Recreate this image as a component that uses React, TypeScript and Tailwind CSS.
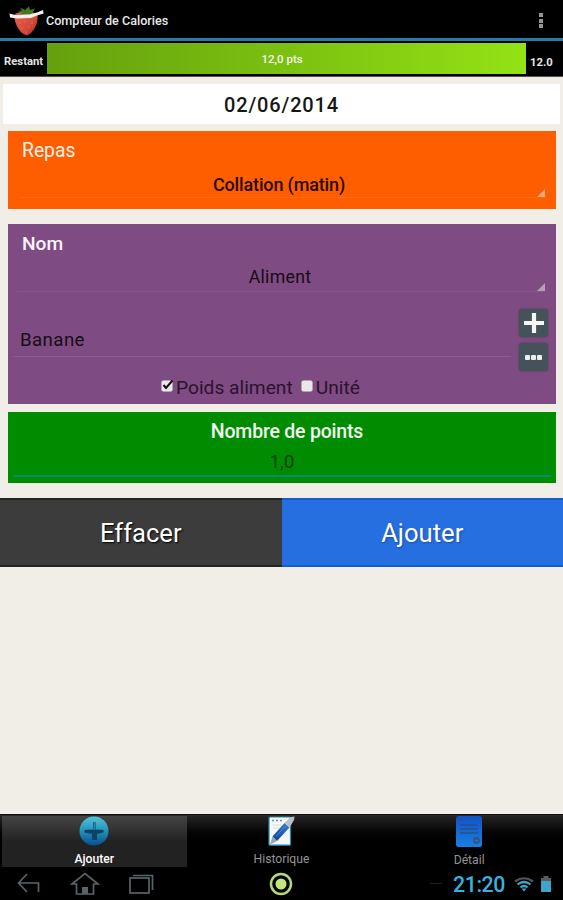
import React from 'react';
import { clsx } from 'clsx';

const StrawberryLogo = () => (
  <svg width="36" height="31" viewBox="0 0 36 31">
    <defs>
      <linearGradient id="berry" x1="0" y1="0" x2="1" y2="1">
        <stop offset="0" stopColor="#e8604c" />
        <stop offset="0.6" stopColor="#d64a39" />
        <stop offset="1" stopColor="#a52c20" />
      </linearGradient>
    </defs>
    <path d="M5.500 9C11 4 23 4 28.500 9C29.500 18 24 27 18 29.500C11 28 5 18 5.500 9Z" fill="url(#berry)" />
    <path d="M8 5L13 4.500L11 1.500L16 4L20 0.500L21 4L26 2.500L24 6L25 9L18 8L10 9L13 6Z" fill="#3f7a1e" />
    <path d="M0.500 7.500L6 9L20 8.500L28 6.500L34 4L34.500 7.500L28 9.500L22 12L8 12.500L1 11.500Z" fill="#f4f0ee" />
    <g fill="#ef8f7b">
      <circle cx="11" cy="17" r=".6" />
      <circle cx="16" cy="16" r=".6" />
      <circle cx="23" cy="17" r=".6" />
      <circle cx="13" cy="22" r=".6" />
      <circle cx="20" cy="21" r=".6" />
      <circle cx="17" cy="26" r=".6" />
    </g>
  </svg>
);

const AddIcon = () => (
  <svg width="30" height="30" viewBox="0 0 30 30">
    <defs>
      <linearGradient id="orb" x1="0" y1="0" x2="0" y2="1">
        <stop offset="0" stopColor="#52c3dc" />
        <stop offset="0.5" stopColor="#2391b5" />
        <stop offset="1" stopColor="#0a4d90" />
      </linearGradient>
    </defs>
    <circle cx="15" cy="15" r="14.500" fill="url(#orb)" />
    <path d="M14 6H16.500V13.500L24.500 14V16.500L18 18V24H13V18L5.500 16.500V14L14 13.500Z" fill="#0c4469" />
    <path d="M15.200 6V14" stroke="#2a87a8" strokeWidth="1.500" />
  </svg>
);

const HistoryIcon = () => (
  <svg width="27" height="30" viewBox="0 0 27 30">
    <defs>
      <linearGradient id="pen" x1="0" y1="1" x2="1" y2="0">
        <stop offset="0" stopColor="#0b3f91" />
        <stop offset="1" stopColor="#3a7fce" />
      </linearGradient>
    </defs>
    <rect x="1" y="1" width="21.500" height="28.200" rx="1" fill="#f3f8fa" stroke="#2a87ae" strokeWidth="1.200" />
    <path d="M4 4.500H16" stroke="#7f8b91" strokeWidth="1.500" strokeDasharray="2 2" />
    <path d="M5 9H14M5 12H12" stroke="#d5e0e6" strokeWidth="1" />
    <path d="M4.500 20.500L16.500 7L21.500 11.500L9 25Z" fill="url(#pen)" />
    <path d="M16.500 7L22.500 1L26.500 0.500L26 4L21.500 11.500Z" fill="#b9bfc9" />
    <path d="M4.500 20.500L9 25L2 28.500Z" fill="#9aa1a8" />
    <path d="M8 20.500L18 9.500" stroke="#5d92d6" strokeWidth="0.800" />
  </svg>
);

const DetailIcon = () => (
  <svg width="26" height="31" viewBox="0 0 26 31">
    <defs>
      <linearGradient id="sheet" x1="0" y1="0" x2="0" y2="1">
        <stop offset="0" stopColor="#1552c6" />
        <stop offset="1" stopColor="#1680e2" />
      </linearGradient>
    </defs>
    <rect width="26" height="31" rx="2.500" fill="url(#sheet)" />
    <path d="M4 3.500H7M4 9H22M4 13H22M4 17H22" stroke="#27508e" strokeWidth="1.300" />
    <circle cx="20.500" cy="24.500" r="3.400" fill="#2a568c" />
    <path d="M18.500 24.500H22.500M20.500 22.500V26.500" stroke="#3f6d9f" strokeWidth="0.800" />
  </svg>
);

const SpinnerCorner = () => (
  <svg width="8" height="8" viewBox="0 0 8 8" className="shrink-0">
    <path d="M8 0V8H0Z" fill="#cfcfcf" fillOpacity="0.65" />
  </svg>
);

interface CheckProps {
  label: string;
  checked?: boolean;
}

function Check({ label, checked }: CheckProps) {
  return (
    <label className="flex items-center gap-[3px]">
      <svg width="12" height="12" viewBox="0 0 12 12" className="mb-1 overflow-visible">
        <rect x="0.500" y="0.500" width="11" height="11" rx="2" fill="#e9e7ea" stroke="#b9a8bc" strokeWidth="0.500" />
        {checked && <path d="M2.500 5L5 8L11.500 0.500" fill="none" stroke="#111" strokeWidth="2" />}
      </svg>
      <span>{label}</span>
    </label>
  );
}

const tabs = [
  { name: 'Ajouter', icon: <AddIcon />, active: true },
  { name: 'Historique', icon: <HistoryIcon />, active: false },
  { name: 'Détail', icon: <DetailIcon />, active: false },
];

export default function App() {
  return (
    <div className="flex h-[900px] w-[563px] flex-col overflow-hidden bg-[#f0eee6] font-[Roboto,sans-serif] text-[#160b17]">
      <header className="flex h-[41px] shrink-0 items-center border-b-[3px] border-[#2a7ca6] bg-black pr-5 pl-[9px]">
        <div className="mt-[4px]">
          <StrawberryLogo />
        </div>
        <h1 className="mt-[4px] ml-[1px] text-[12.6px] font-medium text-[#e8e8e8]">Compteur de Calories</h1>
        <div className="mt-[3px] ml-auto flex flex-col gap-[1.5px]">
          <i className="size-1 bg-[#949494]" />
          <i className="size-1 bg-[#949494]" />
          <i className="size-1 bg-[#949494]" />
        </div>
      </header>

      <div className="flex h-9 shrink-0 border-b border-[#55534f] bg-black text-[11.3px] font-bold text-[#e4e4e4]">
        <span className="w-[47px] pt-[13px] pl-1 leading-[16px]">Restant</span>
        <div className="mt-[2px] flex h-[31px] w-[479px] justify-center bg-linear-to-r from-[#65a00d] to-[#93e215] pr-[9px] text-[11.5px] leading-[32px] font-medium text-[#f3f7e8]">
          12,0 pts
        </div>
        <span className="pt-[14px] pl-1 leading-[16px]">12.0</span>
      </div>

      <main className="flex flex-col">
        <div className="mx-[3px] mt-[7px] h-10 bg-white text-center text-[20px] leading-[42px] font-medium tracking-[0.85px] text-[#161616]">
          02/06/2014
        </div>

        <section className="mt-[7px] mr-[7px] ml-2 h-[78px] bg-[#ff5e00] pt-[8px]">
          <h2 className="pl-[14px] text-[19.300px] leading-6 text-[#fff0e6]">Repas</h2>
          <div className="mr-[11px] ml-[11px] flex h-[35px] items-end border-b border-[#ff6a0e]">
            <span className="flex-1 pl-[2px] text-center text-[18px] leading-6 font-medium tracking-[-0.15px] text-[#260b02]">Collation (matin)</span>
            <SpinnerCorner />
          </div>
        </section>

        <section className="mt-[15px] mr-[7px] ml-2 h-[180px] bg-[#7e4b82] pt-[8px]">
          <h2 className="pl-[14px] text-[19.200px] leading-6 font-medium text-[#fbf4fb]">Nom</h2>
          <div className="mr-[11px] ml-[9px] flex h-9 items-end border-b border-[#875789]">
            <span className="flex-1 pb-[2px] pl-[6px] text-center text-[17.700px] leading-6 tracking-[0.3px]">Aliment</span>
            <SpinnerCorner />
          </div>
          <div className="mt-[17px] flex">
            <div className="ml-[5px] flex h-12 w-[498px] items-end border-b border-[#8b5b8d] pb-[3px] pl-[7px] text-[18.700px] leading-[25px] tracking-[0.4px]">
              Banane
            </div>
            <div className="ml-[8px] flex flex-col gap-[6px]">
              <button className="flex h-7 w-[29px] items-center justify-center rounded-[4px] bg-[#455259] shadow-[0_0_2px_#39404a]">
                <svg width="22" height="22" viewBox="0 0 22 22">
                  <path d="M11 1V21M1 11H21" stroke="#f5f6f6" strokeWidth="4.200" />
                </svg>
              </button>
              <button className="flex h-7 w-[29px] items-center justify-center gap-[1px] rounded-[4px] bg-[#455259] shadow-[0_0_2px_#39404a]">
                <i className="size-[5px] rounded-[1px] bg-[#eceded]" />
                <i className="size-[5px] rounded-[1px] bg-[#eceded]" />
                <i className="size-[5px] rounded-[1px] bg-[#eceded]" />
              </button>
            </div>
          </div>
          <div className="mt-[5px] ml-[153px] flex gap-2 text-[19.200px] leading-6 text-[#2c1230]">
            <Check label="Poids aliment" checked />
            <Check label="Unité" />
          </div>
        </section>

        <section className="mt-2 mr-[7px] ml-2 h-[71px] bg-[#008c00] pt-[7px] text-center">
          <h2 className="pl-[10px] text-[19.500px] leading-[25px] font-medium tracking-[-0.2px] text-[#f1fbf1]">Nombre de points</h2>
          <div className="mx-[5px] h-[33px] border-b-2 border-[#008d78] text-[19px] leading-[36px] text-[#063f06]">1,0</div>
        </section>

        <div className="mt-[15px] grid h-[69px] grid-cols-2 text-[25.600px] text-white">
          <button className="h-[69px] border-y-2 border-[#242424] bg-[#3c3c3c] pt-[2px] leading-[63px] text-shadow-[1px_1px_2px_#000]">Effacer</button>
          <button className="h-[69px] border-y-2 border-[#165bd0] bg-[#266fe0] pt-[2px] leading-[63px] text-shadow-[1px_1px_2px_#1e4ea0]">Ajouter</button>
        </div>
      </main>

      <nav className="mt-auto grid h-[53px] shrink-0 grid-cols-3 border-t border-[#111] bg-linear-to-b from-[#272727] to-black to-60% pt-[1px]">
        {tabs.map((tab) => (
          <div
            key={tab.name}
            className={clsx(
              'flex h-[51px] flex-col items-center text-[12.200px] leading-[16px]',
              tab.active ? 'mr-[1px] ml-[2px] bg-linear-to-b from-[#454545] to-[#222] to-50% font-medium text-white' : 'text-[#929292]'
            )}
          >
            <div className="flex h-[31px] items-center">{tab.icon}</div>
            <span className="mt-[5px]">{tab.name}</span>
          </div>
        ))}
      </nav>

      <footer className="flex h-[33px] shrink-0 items-center bg-black">
        <svg width="164" height="33" viewBox="0 0 164 33" fill="none" stroke="#586467" strokeWidth="1.700">
          <path d="M27 7L18.500 16L27 25M18.500 16H38.500V25" />
          <path d="M72 17L85 6.500L98 17H93.500V27H76.500V17Z" />
          <path d="M82 27V20H88V27Z" fill="#586467" stroke="none" />
          <rect x="130" y="11" width="19" height="15" />
          <path d="M133 8.500H152.500V23" />
        </svg>
        <svg width="24" height="24" viewBox="0 0 24 24" className="ml-[105px]">
          <circle cx="12" cy="12" r="10" fill="none" stroke="#b6d77a" strokeWidth="2.500" />
          <circle cx="12" cy="12" r="5.500" fill="#c1e681" />
        </svg>
        <i className="ml-[137px] h-[1px] w-[12px] bg-[#172527]" />
        <span className="ml-[11px] w-[52px] pt-[2px] text-[21.300px] leading-8 font-medium tracking-[-0.4px] whitespace-nowrap text-[#38b3df]">21:20</span>
        <svg width="20" height="15" viewBox="0 0 20 15" className="mt-[2px] ml-[9px]">
          <path d="M1 4.500Q10 -2 19 4.500" fill="none" stroke="#505759" strokeWidth="2.200" />
          <path d="M3.500 7.500Q10 2.500 16.500 7.500M6.500 10.500Q10 7.500 13.500 10.500" fill="none" stroke="#3ba6ca" strokeWidth="2.200" />
          <path d="M7.500 11.500H12.500L10 14.500Z" fill="#3ba6ca" />
        </svg>
        <svg width="10" height="16" viewBox="0 0 10 16" className="ml-[7px]">
          <path d="M2.500 0H7.500V2H10V5H0V2H2.500Z" fill="#555d60" />
          <rect y="5" width="10" height="11" fill="#3ba6ca" />
        </svg>
      </footer>
    </div>
  );
}
